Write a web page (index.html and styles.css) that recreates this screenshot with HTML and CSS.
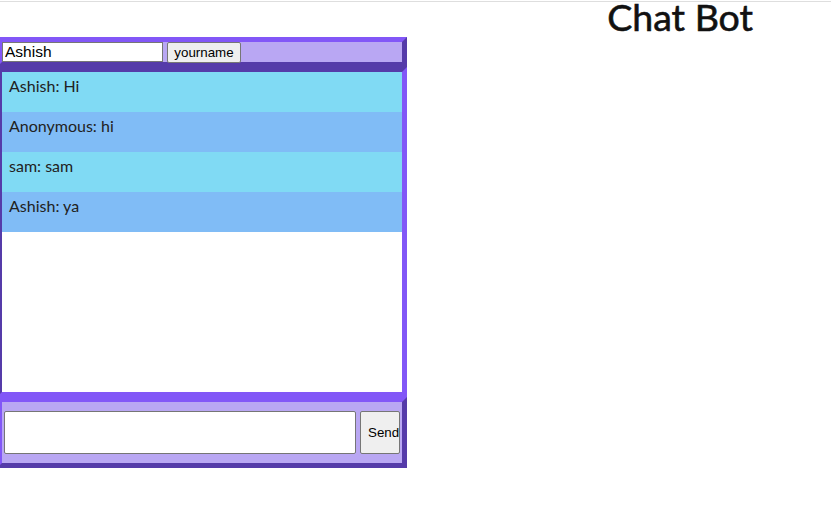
FILE: index.html
```html
<!DOCTYPE html>
<html>
<head>
<meta charset="utf-8">
<link rel="stylesheet" href="styles.css">
</head>
<body>
<div class="topline"></div>
<h1 class="title">Chat Bot</h1>
<div class="chat">
  <div class="namebar">
    <input class="name-input" type="text" value="Ashish">
    <button class="name-btn">yourname</button>
  </div>
  <div class="messages">
    <div class="msg msg-cyan">Ashish: Hi</div>
    <div class="msg msg-blue">Anonymous: hi</div>
    <div class="msg msg-cyan">sam: sam</div>
    <div class="msg msg-blue">Ashish: ya</div>
  </div>
  <div class="composer">
    <input class="composer-input" type="text">
    <button class="send-btn">Send</button>
  </div>
</div>
</body>
</html>
```
FILE: styles.css
```css
* { box-sizing: border-box; }
html, body { margin: 0; padding: 0; background: #fff; }
body { font-family: "Lato", "Noto Sans", sans-serif; color: #222; }

.topline {
  margin-top: 1px;
  border-top: 1px solid #dedede;
}

.title {
  margin: 0;
  height: 35px;
  padding: 0 78px 0 0;
  line-height: 29px;
  font-size: 37.5px;
  font-weight: 400;
  -webkit-text-stroke: 0.6px #111;
  color: #111;
  text-align: right;
}

.chat {
  width: 410px;
  margin-left: -3px;
}

.namebar {
  display: flex;
  align-items: flex-start;
  gap: 4px;
  height: 30px;
  border: 5px solid;
  border-color: #8257f7 #553ba9 #553ba9 #8257f7;
  background: #b9a7f3;
}

.name-input {
  width: 161px;
  height: 20px;
  margin: 0;
  padding: 0 2px;
  border: 1px solid #767676;
  font-family: "Liberation Sans", Arial, sans-serif;
  font-size: 15.5px;
  color: #000;
  background: #fff;
}

.name-btn {
  width: 74px;
  height: 21px;
  margin: 0;
  padding: 0 6px;
  border: 1px solid #767676;
  border-radius: 2px;
  background: #efefef;
  font-family: "Liberation Sans", Arial, sans-serif;
  font-size: 13.33px;
  color: #000;
}

.messages {
  height: 330px;
  border: 5px solid;
  border-color: #553ba9 #8257f7 #8257f7 #553ba9;
  background: #fff;
}

.msg {
  height: 40px;
  padding: 4px 7px 0;
  font-size: 16px;
  line-height: 20px;
}
.msg-cyan { background: #80daf4; }
.msg-blue { background: #80bcf6; }

.composer {
  display: flex;
  gap: 4px;
  padding: 9px 2px;
  height: 71px;
  border: 5px solid;
  border-color: #8257f7 #553ba9 #553ba9 #8257f7;
  background: #b9a7f3;
}

.composer-input {
  width: 352px;
  height: 43px;
  margin: 0;
  border: 1px solid #767676;
  border-radius: 2px;
  background: #fff;
}

.send-btn {
  width: 40px;
  height: 43px;
  margin: 0;
  padding: 0 0 0 7px;
  text-align: left;
  overflow: hidden;
  white-space: nowrap;
  border: 1px solid #767676;
  border-radius: 2px;
  background: #efefef;
  font-family: "Liberation Sans", Arial, sans-serif;
  font-size: 13.33px;
  color: #000;
}
```
